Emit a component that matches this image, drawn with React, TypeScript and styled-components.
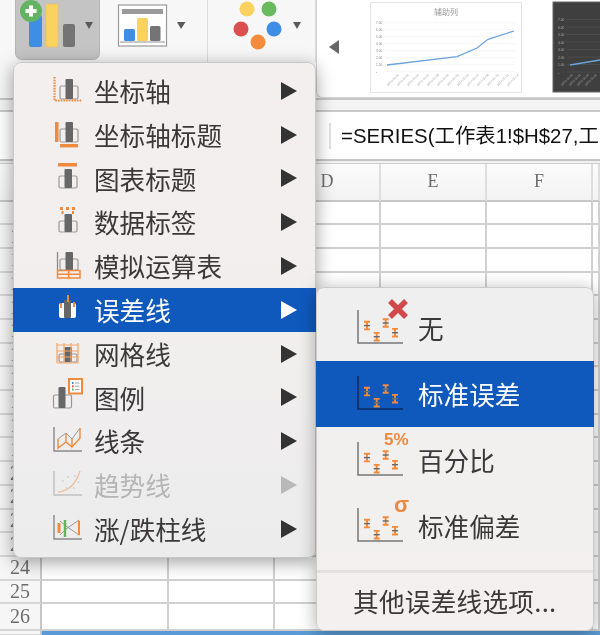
import React from "react";
import styled, { createGlobalStyle } from "styled-components";

const Global = createGlobalStyle`
  html, body { margin: 0; padding: 0; background: #fff; }
  * { box-sizing: border-box; }
`;

const Page = styled.div`
  position: relative;
  width: 600px;
  height: 635px;
  overflow: hidden;
  background: #fff;
  display: flex;
  flex-direction: column;
  font-family: "Noto Sans CJK SC", "Liberation Sans", sans-serif;
  filter: blur(0.4px);
`;

/* ---------- ribbon ---------- */
const Ribbon = styled.header`
  height: 100px;
  flex: none;
  display: flex;
  padding-left: 15px;
  background: #f7f7f7;
  border-bottom: 2px solid #c6c6c6;
`;
const ChartButton = styled.div`
  width: 85px;
  height: 60px;
  background: #c4c4c4;
  border: 1px solid #b5b5b5;
  border-top: 0;
  border-radius: 0 0 7px 7px;
`;
const RibbonGroup = styled.div<{ $w: number }>`
  width: ${(p) => p.$w}px;
  height: 62px;
  border-right: 1px solid #dcdcdc;
`;
const Gallery = styled.div`
  flex: 1;
  height: 98px;
  background: #fff;
  border-left: 1px solid #d4d4d4;
  border-bottom: 1px solid #d4d4d4;
  border-bottom-left-radius: 6px;
`;
const Drawing = styled.svg`
  display: block;
  overflow: visible;
`;

/* ---------- formula bar ---------- */
const Band = styled.div`
  height: 12px;
  flex: none;
  background: #f4f4f4;
  border-bottom: 2px solid #c8c8c8;
`;
const FormulaBar = styled.div`
  height: 49px;
  flex: none;
  display: flex;
  align-items: center;
  padding-left: 329px;
  background: #fff;
  border-bottom: 2px solid #c4c4c4;
  overflow: hidden;
`;
const FormulaInput = styled.div`
  height: 26px;
  padding-left: 10px;
  border-left: 2px solid #e2e2e2;
  font: 20.4px/26px "Liberation Sans", "Noto Sans CJK SC", sans-serif;
  color: #111;
  white-space: nowrap;
`;
const Gap = styled.div`
  height: 3px;
  flex: none;
  background: #f0f0f0;
  border-bottom: 1px solid #cfcfcf;
`;

/* ---------- sheet ---------- */
const Sheet = styled.div`
  flex: 1;
  display: grid;
  grid-template-columns: 42px 127px repeat(4, 106px) 7px;
  grid-template-rows: 37.6px repeat(17, 23.7px) 27px 5px;
  font-family: "Liberation Serif", serif;
  color: #6d6d6d;
`;
const ColHead = styled.div`
  display: flex;
  align-items: center;
  justify-content: center;
  font-size: 18px;
  background: linear-gradient(#fbfbfb, #f3f3f3);
  border-right: 2px solid #dedede;
  border-bottom: 2px solid #c6c6c6;
`;
const RowHead = styled.div`
  display: flex;
  align-items: center;
  justify-content: center;
  font-size: 20px;
  background: #f6f6f6;
  border-right: 2px solid #c6c6c6;
  border-bottom: 2px solid #d6d6d6;
`;
const Cell = styled.div`
  background: #fff;
  border-right: 2px solid #d0d0d0;
  border-bottom: 2px solid #d0d0d0;
`;
const SelectedRow = styled.div`
  grid-column: 2 / -1;
  background: #5b9bd5;
`;

/* ---------- menus ---------- */
const Menu = styled.div`
  position: absolute;
  left: 13px;
  top: 62px;
  width: 303px;
  height: 496px;
  padding-top: 6px;
  background: linear-gradient(#f3efee, #f1eeee 60%, #ececec);
  border: 1px solid #c9c9c9;
  border-radius: 8px;
  box-shadow: 0 4px 18px rgba(0, 0, 0, 0.38);
`;
const SubMenu = styled.div`
  position: absolute;
  left: 316px;
  top: 287px;
  width: 278px;
  height: 344px;
  padding-top: 7px;
  background: linear-gradient(#efefef, #f3f0ef);
  border: 1px solid #cbcbcb;
  border-radius: 8px;
  box-shadow: 0 3px 18px rgba(0, 0, 0, 0.32);
`;
const Row = styled.div<{ $active?: boolean; $disabled?: boolean }>`
  height: 43.8px;
  margin: 0 -1px;
  display: flex;
  align-items: center;
  gap: 9px;
  padding: 0 19px 0 38px;
  font-size: 25.6px;
  line-height: 1;
  color: ${(p) => (p.$active ? "#fff" : p.$disabled ? "#b5b5b5" : "#3a3838")};
  background: ${(p) => (p.$active ? "#0f59bd" : "transparent")};
`;
const RowIcon = styled.span<{ $disabled?: boolean }>`
  display: block;
  opacity: ${(p) => (p.$disabled ? 0.45 : 1)};
`;
const Arrow = styled.span<{ $active?: boolean; $disabled?: boolean }>`
  margin-left: auto;
  width: 0;
  height: 0;
  border-style: solid;
  border-width: 9px 0 9px 16px;
  border-color: transparent transparent transparent
    ${(p) => (p.$active ? "#fff" : p.$disabled ? "#b8b8b8" : "#333")};
`;
const SubRow = styled.div<{ $active?: boolean }>`
  position: relative;
  height: 66px;
  margin: 0 -1px;
  display: flex;
  align-items: center;
  gap: 13px;
  padding-left: 39px;
  font-size: 25.6px;
  line-height: 1;
  color: ${(p) => (p.$active ? "#fff" : "#3a3838")};
  background: ${(p) => (p.$active ? "#0f59bd" : "transparent")};
`;
const SubIcon = styled.span`
  display: block;
  margin-top: -3px;
`;
const Badge = styled.span<{ $left: number; $top: number; $size: number }>`
  position: absolute;
  left: ${(p) => p.$left}px;
  top: ${(p) => p.$top}px;
  font: bold ${(p) => p.$size}px/22px "Liberation Sans", sans-serif;
  color: #f0883c;
`;
const Separator = styled.div`
  height: 3px;
  margin-top: 11px;
  background: #e2e0df;
`;
const MoreRow = styled.div`
  height: 55px;
  display: flex;
  align-items: center;
  padding-left: 36px;
  font-size: 25.6px;
  letter-spacing: 0.3px;
  color: #3a3838;
  white-space: nowrap;
`;

/* ---------- drawings ---------- */
const OR = "#f08a3c";
const Bars = ({ x = 9, y = 5, h = 19 }: { x?: number; y?: number; h?: number }) => (
  <g>
    <rect x={x} y={y + 7} width={18} height={h - 7} rx={1.5} fill="none" stroke="#989898" strokeWidth={1.2} />
    <rect x={x + 5.5} y={y} width={7.5} height={h} rx={1} fill="#676767" />
  </g>
);
const Ico = ({ children }: { children: React.ReactNode }) => (
  <Drawing width={34} height={32} viewBox="0 0 34 32">{children}</Drawing>
);
const LAxis = ({ top = 2 }: { top?: number }) => (
  <path d={`M3 ${top}V26H31`} fill="none" stroke="#8a8a8a" strokeWidth={1.4} />
);

const icons: Record<string, React.ReactNode> = {
  axis: (
    <Ico>
      <Bars x={9} y={4} h={20} />
      <path d="M3.5 2V25.5H31" fill="none" stroke={OR} strokeWidth={2.2} strokeDasharray="1.6 1.1" />
    </Ico>
  ),
  axisTitle: (
    <Ico>
      <Bars x={9} y={3} h={20} />
      <rect x={4} y={3} width={3.5} height={20} fill={OR} />
      <rect x={9} y={25} width={18} height={3.4} fill={OR} />
    </Ico>
  ),
  chartTitle: (
    <Ico>
      <rect x={7} y={1} width={19} height={3.5} fill={OR} />
      <Bars x={8} y={7} h={19} />
    </Ico>
  ),
  dataLabel: (
    <Ico>
      <path d="M9 2.5H24M10.5 6.5H12.5M21 6.5H23" stroke={OR} strokeWidth={3} strokeDasharray="3 3" fill="none" />
      <Bars x={8} y={8} h={18} />
    </Ico>
  ),
  dataTable: (
    <Ico>
      <path d="M6.5 2V20" stroke="#8a8a8a" strokeWidth={1.3} />
      <Bars x={9} y={2} h={18} />
      <path d="M6.5 20.5H29V28H6.5ZM6.5 24.2H29M17.7 20.5V28" fill="none" stroke={OR} strokeWidth={1.5} />
    </Ico>
  ),
  errorBars: (
    <Ico>
      <rect x={8} y={9} width={17} height={15} rx={2} fill="#fff" />
      <rect x={13} y={6} width={7} height={18} rx={1} fill="#666" />
      <path d="M10 9V14M17 1V8M23 8V13" stroke={OR} strokeWidth={2} />
    </Ico>
  ),
  grid: (
    <Ico>
      <Bars x={8} y={9} h={15} />
      <path d="M6 5V25M13 5V25M20 5V25M27 5V25M6 7H27M6 13H27M6 19H27M6 25H27" stroke="#f4a56a" strokeWidth={1.2} fill="none" />
    </Ico>
  ),
  legend: (
    <Ico>
      <rect x={2.5} y={14} width={18} height={13} rx={1.5} fill="none" stroke="#989898" strokeWidth={1.2} />
      <rect x={7.5} y={6} width={7} height={21} rx={1} fill="#676767" />
      <rect x={18} y={-2} width={13} height={14.5} fill="#fafafa" stroke={OR} strokeWidth={2} />
      <path d="M21 2H22.5" stroke="#3a7fd5" strokeWidth={2} />
      <path d="M21 5.2H22.5" stroke="#d9534f" strokeWidth={2} />
      <path d="M21 8.5H22.5" stroke="#4fae57" strokeWidth={2} />
      <path d="M24 2H28.5M24 5.2H28.5M24 8.5H28.5" stroke="#a9a9a9" strokeWidth={1} />
    </Ico>
  ),
  line: (
    <Ico>
      <LAxis />
      <path d="M7 14L15 8L21 14L29 3" fill="none" stroke="#9a9a9a" strokeWidth={1} />
      <path d="M7 14V23L15 17V8M21 14V22L29 13V3M15 17L21 22" fill="none" stroke={OR} strokeWidth={1.4} />
    </Ico>
  ),
  trend: (
    <Ico>
      <LAxis />
      <path d="M7 23C17 22 25 15 29 2" fill="none" stroke={OR} strokeWidth={1.3} />
      <path d="M11 12H12.5M16 8H17.5M15 19H16.5M22 19H23.5M27 13H28.5M23 7H24.5" stroke="#888" strokeWidth={1.2} />
    </Ico>
  ),
  updown: (
    <Ico>
      <LAxis />
      <path d="M9 8L15 13L28 22M9 22L15 16L28 7" fill="none" stroke="#9a9a9a" strokeWidth={1} />
      <path d="M8 10V20" stroke={OR} strokeWidth={3} fill="none" />
      <path d="M14 7V24" stroke="#5cb85c" strokeWidth={2.4} />
      <path d="M28 8V22" stroke={OR} strokeWidth={2} />
    </Ico>
  ),
};

const Beam = ({ x, y }: { x: number; y: number }) => (
  <g>
    <path d={`M${x - 3} ${y - 3.8}H${x + 3}M${x - 3} ${y + 3.8}H${x + 3}M${x} ${y - 4}V${y + 4}`} stroke={OR} strokeWidth={1.9} fill="none" />
    <path d={`M${x - 3} ${y}H${x + 3}`} stroke="#6a6a6a" strokeWidth={1.5} />
  </g>
);
const Scatter = ({ active, cross }: { active?: boolean; cross?: boolean }) => (
  <Drawing width={50} height={36} viewBox="0 0 50 36">
    <path d="M3 1V34H48" fill="none" stroke={active ? "#0b2a5c" : "#777"} strokeWidth={1.5} />
    <Beam x={12} y={16.6} />
    <Beam x={21.7} y={27.7} />
    <Beam x={30.7} y={14} />
    <Beam x={40} y={23.7} />
    {cross && <path d="M35 -8L51 8M51 -8L35 8" stroke="#d0494b" strokeWidth={5.5} />}
  </Drawing>
);

const ChartAdd = () => (
  <Drawing width={85} height={59} viewBox="0 0 85 59">
    <rect x={13} y={15} width={13} height={32} rx={2} fill="#3f8ee6" />
    <rect x={30} y={4} width={12} height={43} rx={1.5} fill="#fbd25f" stroke="#e9c355" strokeWidth={0.6} />
    <rect x={47} y={24} width={12} height={23} rx={2} fill="#747474" />
    <circle cx={15} cy={11} r={11} fill="#62b463" />
    <path d="M15 5.5V16.5M9.5 11H20.5" stroke="#fff" strokeWidth={4} />
    <path d="M69 22H77L73 29Z" fill="#5a5a5a" />
  </Drawing>
);
const ChartLayout = () => (
  <Drawing width={108} height={59} viewBox="0 0 108 59">
    <rect x={18.5} y={5} width={48} height={41} fill="#fff" stroke="#9a9a9a" strokeWidth={1.2} />
    <rect x={22} y={9} width={41} height={5} fill="#9a9a9a" />
    <rect x={24} y={29} width={11} height={12} rx={1.5} fill="#3f8ee6" />
    <rect x={37} y={18} width={11} height={23} rx={1.5} fill="#fbd25f" />
    <rect x={50} y={26} width={10.5} height={15} rx={1.5} fill="#747474" />
    <rect x={20} y={41} width={45} height={2} fill="#c8c8c8" />
    <path d="M77 22H85.5L81 29Z" fill="#5a5a5a" />
  </Drawing>
);
const ColorDots = () => (
  <Drawing width={107} height={59} viewBox="0 0 107 59">
    <circle cx={39} cy={9} r={7.5} fill="#fbd25f" />
    <circle cx={61} cy={9} r={7.5} fill="#69b95f" />
    <circle cx={33} cy={29} r={7.5} fill="#dc4f51" />
    <circle cx={66} cy={29} r={7.5} fill="#3f8ee6" />
    <circle cx={50} cy={42} r={7.5} fill="#f58c3c" />
    <path d="M85 22H93L89 29Z" fill="#5a5a5a" />
  </Drawing>
);

const dates = ["2016-12-20","2016-12-22","2016-12-24","2016-12-26","2016-12-28","2016-12-30","2017-01-02","2017-01-04","2017-01-06","2017-01-08","2017-01-10","2017-01-12","2017-01-14"];
const yTicks = ["7.00","6.00","5.00","4.00","3.00","2.00","1.00","-"];

const Thumbs = () => (
  <Drawing width={283} height={97} viewBox="317 0 283 97">
    <path d="M339 40L329 47L339 54Z" fill="#666" />
    <rect x={370.5} y={2.5} width={151} height={90} fill="#fff" stroke="#e4e4e4" />
    <text x={446} y={15} textAnchor="middle" fontSize={8} fill="#999" fontFamily="Noto Sans CJK SC">辅助列</text>
    {yTicks.map((t, i) => (
      <g key={t}>
        <text x={376} y={24 + i * 7} fontSize={3.2} fill="#888" fontFamily="Liberation Sans">{t}</text>
        <path d={`M385 ${22.7 + i * 7}H515`} stroke="#f0f0f0" strokeWidth={0.7} />
      </g>
    ))}
    {dates.map((d, i) => (
      <text key={d} x={0} y={0} fontSize={3} fill="#999" fontFamily="Liberation Sans" transform={`translate(${388 + i * 10},86) rotate(-45)`}>{d}</text>
    ))}
    <polyline points="387,65 457,56.7 477,48 488,39.3 514,31" fill="none" stroke="#6aa5db" strokeWidth={1.3} />
    <rect x={553} y={2} width={48} height={90} fill="#3f3f3f" stroke="#666" />
    {yTicks.map((t, i) => (
      <g key={t}>
        <text x={558} y={21 + i * 7.5} fontSize={3.2} fill="#aaa" fontFamily="Liberation Sans">{t}</text>
        <path d={`M567 ${19.5 + i * 7.5}H600`} stroke="#555" strokeWidth={0.6} />
      </g>
    ))}
    {dates.slice(0, 4).map((d, i) => (
      <text key={d} x={0} y={0} fontSize={3} fill="#aaa" fontFamily="Liberation Sans" transform={`translate(${562 + i * 8},86) rotate(-45)`}>{d}</text>
    ))}
    <polyline points="570,65 600,60" fill="none" stroke="#6aa5db" strokeWidth={1.3} />
  </Drawing>
);

const items = [
  { k: "axis", t: "坐标轴" },
  { k: "axisTitle", t: "坐标轴标题" },
  { k: "chartTitle", t: "图表标题" },
  { k: "dataLabel", t: "数据标签" },
  { k: "dataTable", t: "模拟运算表" },
  { k: "errorBars", t: "误差线", active: true },
  { k: "grid", t: "网格线" },
  { k: "legend", t: "图例" },
  { k: "line", t: "线条" },
  { k: "trend", t: "趋势线", disabled: true },
  { k: "updown", t: "涨/跌柱线" },
];

const headers = ["", "", "", "D", "E", "F", ""];
const cells = [0, 1, 2, 3, 4, 5];
const rowNumbers = Array.from({ length: 18 }, (_, i) => 9 + i);

export default function App() {
  return (
    <Page>
      <Global />
      <Ribbon>
        <ChartButton><ChartAdd /></ChartButton>
        <RibbonGroup $w={108}><ChartLayout /></RibbonGroup>
        <RibbonGroup $w={108}><ColorDots /></RibbonGroup>
        <Gallery><Thumbs /></Gallery>
      </Ribbon>
      <Band />
      <FormulaBar>
        <FormulaInput>=SERIES(工作表1!$H$27,工</FormulaInput>
      </FormulaBar>
      <Gap />
      <Sheet>
        {headers.map((h, i) => (
          <ColHead key={i}>{h}</ColHead>
        ))}
        {rowNumbers.map((n) => (
          <React.Fragment key={n}>
            <RowHead>{n}</RowHead>
            {cells.map((c) => (
              <Cell key={c} />
            ))}
          </React.Fragment>
        ))}
        <RowHead />
        <SelectedRow />
      </Sheet>

      <Menu>
        {items.map((it) => (
          <Row key={it.k} $active={it.active} $disabled={it.disabled}>
            <RowIcon $disabled={it.disabled}>{icons[it.k]}</RowIcon>
            <span>{it.t}</span>
            <Arrow $active={it.active} $disabled={it.disabled} />
          </Row>
        ))}
      </Menu>

      <SubMenu>
        <SubRow>
          <SubIcon><Scatter cross /></SubIcon>
          <span>无</span>
        </SubRow>
        <SubRow $active>
          <SubIcon><Scatter active /></SubIcon>
          <span>标准误差</span>
        </SubRow>
        <SubRow>
          <SubIcon><Scatter /></SubIcon>
          <Badge $left={68} $top={2} $size={17}>5%</Badge>
          <span>百分比</span>
        </SubRow>
        <SubRow>
          <SubIcon><Scatter /></SubIcon>
          <Badge $left={78} $top={1} $size={22}>σ</Badge>
          <span>标准偏差</span>
        </SubRow>
        <Separator />
        <MoreRow>其他误差线选项...</MoreRow>
      </SubMenu>
    </Page>
  );
}
